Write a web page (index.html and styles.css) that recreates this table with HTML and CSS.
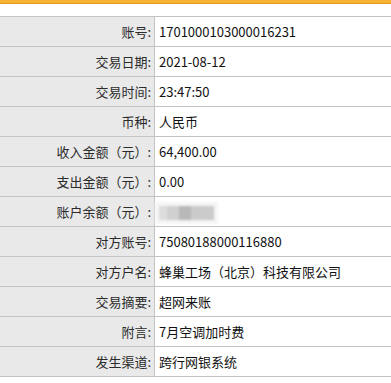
FILE: index.html
```html
<!DOCTYPE html>
<html lang="zh">
<head>
<meta charset="utf-8">
<link rel="stylesheet" href="styles.css">
</head>
<body>
<div class="topbar"></div>
<table class="detail">
  <tr><th>账号:</th><td>1701000103000016231</td></tr>
  <tr><th>交易日期:</th><td>2021-08-12</td></tr>
  <tr><th>交易时间:</th><td>23:47:50</td></tr>
  <tr><th>币种:</th><td>人民币</td></tr>
  <tr><th>收入金额（元）:</th><td>64,400.00</td></tr>
  <tr><th>支出金额（元）:</th><td>0.00</td></tr>
  <tr><th>账户余额（元）:</th><td><div class="masked"><span class="m1"></span><span class="m2"></span><span class="m3"></span><span class="m4"></span></div></td></tr>
  <tr><th>对方账号:</th><td>75080188000116880</td></tr>
  <tr><th>对方户名:</th><td>蜂巢工场（北京）科技有限公司</td></tr>
  <tr><th>交易摘要:</th><td>超网来账</td></tr>
  <tr><th>附言:</th><td>7月空调加时费</td></tr>
  <tr><th>发生渠道:</th><td>跨行网银系统</td></tr>
</table>
</body>
</html>
```
FILE: styles.css
```css
html, body {
  margin: 0;
  padding: 0;
  background: #ffffff;
}
body {
  font-family: "Microsoft YaHei", "Noto Sans CJK SC", "Noto Sans", sans-serif;
  font-size: 13px;
  color: #1a1a1a;
}
.topbar {
  height: 3px;
  background: #f7b133;
  border-bottom: 1px solid #e49a22;
  margin-bottom: 12px;
}
.detail {
  width: 100%;
  border-collapse: collapse;
  border-top: 1px solid #c4c4c4;
  border-bottom: 1px solid #c4c4c4;
}
.detail tr {
  height: 30px;
}
.detail th, .detail td {
  border-bottom: 1px solid #c4c4c4;
  padding: 0;
  line-height: 29px;
  font-weight: normal;
  white-space: nowrap;
}
.detail th {
  width: 151px;
  background: #e8e9e8;
  text-align: right;
  padding-right: 3px;
  border-right: 1px solid #c4c4c4;
  color: #2b2b2b;
}
.detail td {
  text-align: left;
  padding-left: 4px;
  color: #111;
}
.masked {
  display: flex;
  width: 55px;
  height: 14px;
  margin-top: 2px;
  filter: blur(1.2px);
  box-shadow: 0 0 0 4px #f5f5f5;
  background: #f5f5f5;
}
.masked span { display: block; height: 14px; }
.m1 { width: 8px; background: #dcdcdc; }
.m2 { width: 12px; background: #d0d0d0; }
.m3 { width: 12px; background: #b8b8b8; }
.m4 { width: 23px; background: #cbcbcb; }
```
